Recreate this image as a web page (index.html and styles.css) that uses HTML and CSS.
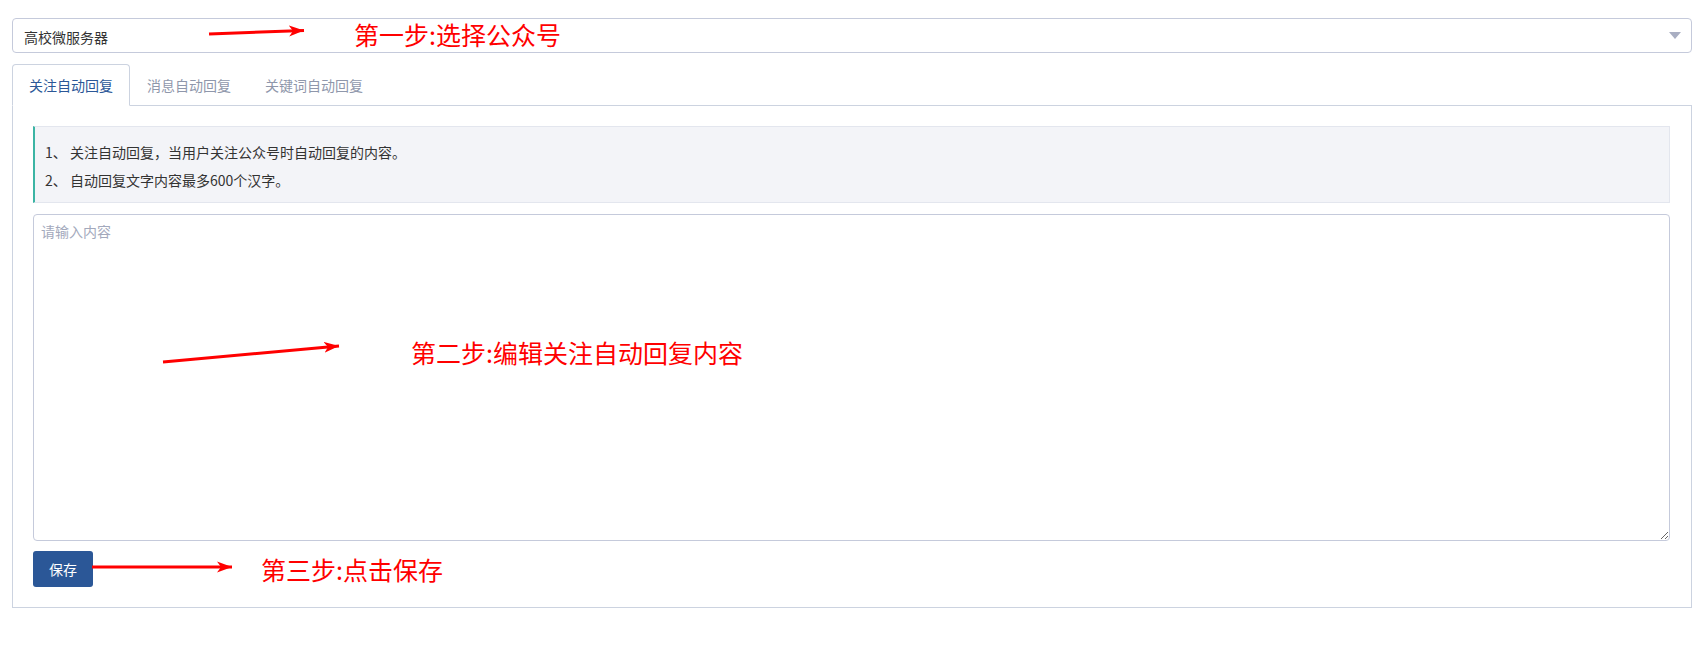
FILE: index.html
```
<!DOCTYPE html>
<html lang="zh-CN">
<head>
    <meta charset="UTF-8">
    <title>自动回复</title>
    <link rel="stylesheet" href="styles.css">
</head>
<body>
    <div class="page">
        <div class="select-box">
            <span class="select-value">高校微服务器</span>
            <span class="select-caret"></span>
        </div>

        <ul class="tabs">
            <li class="tab active">关注自动回复</li>
            <li class="tab">消息自动回复</li>
            <li class="tab">关键词自动回复</li>
        </ul>

        <div class="panel">
            <div class="tips">
                <p>1、 关注自动回复，当用户关注公众号时自动回复的内容。</p>
                <p>2、 自动回复文字内容最多600个汉字。</p>
            </div>
            <textarea class="content-input" placeholder="请输入内容"></textarea>
            <div class="actions">
                <button class="btn-save">保存</button>
            </div>
        </div>
    </div>

    <!-- hand drawn annotations over the screenshot -->
    <svg class="marks" width="1704" height="654" viewBox="0 0 1704 654">
        <defs>
            <marker id="head" markerUnits="userSpaceOnUse" markerWidth="16" markerHeight="12" refX="15" refY="6" orient="auto">
                <path d="M0,0.5 L15,6 L0,11.5 L4,6 Z" fill="#ff0000"/>
            </marker>
        </defs>
        <line x1="209" y1="34" x2="304" y2="30.5" stroke="#ff0000" stroke-width="3" marker-end="url(#head)"/>
        <line x1="163" y1="362" x2="339" y2="346" stroke="#ff0000" stroke-width="3" marker-end="url(#head)"/>
        <line x1="92" y1="567" x2="232" y2="567" stroke="#ff0000" stroke-width="3" marker-end="url(#head)"/>
    </svg>
    <div class="note note-1">第一步:选择公众号</div>
    <div class="note note-2">第二步:编辑关注自动回复内容</div>
    <div class="note note-3">第三步:点击保存</div>
</body>
</html>
```

FILE: styles.css
```
body {
    margin: 0;
    padding: 0;
    background: #fff;
    font-family: "Noto Sans CJK SC", "Liberation Sans", sans-serif;
    font-size: 14px;
    color: #333;
}
.page {
    padding: 18px 12px 0 12px;
}
.select-box {
    height: 33px;
    border: 1px solid #c5cadb;
    border-radius: 4px;
    display: flex;
    align-items: center;
    justify-content: space-between;
    padding: 0 10px 0 11px;
}
.select-value {
    font-size: 14px;
    color: #333;
    line-height: 20px;
    padding-top: 3px;
}
.select-caret {
    width: 0;
    height: 0;
    border-left: 6px solid transparent;
    border-right: 6px solid transparent;
    border-top: 7px solid #a9aec2;
}
.tabs {
    list-style: none;
    margin: 11px 0 0 0;
    padding: 0;
    display: flex;
    border-bottom: 1px solid #ccd3e0;
}
.tab {
    padding: 10px 16px 10px 16px;
    line-height: 20px;
    margin-bottom: -1px;
    border: 1px solid transparent;
    border-radius: 4px 4px 0 0;
    color: #8f97ab;
    font-size: 14px;
}
.tab.active {
    color: #2b5797;
    background: #fff;
    border-color: #ccd3e0;
    border-bottom-color: #fff;
}
.panel {
    border: 1px solid #ccd3e0;
    border-top: none;
    padding: 20px 21px 20px 20px;
}
.tips {
    background: #f3f4f8;
    border: 1px solid #e3e6ee;
    border-left: 2px solid #3bb4a4;
    padding: 11px 12px 8px 10px;
}
.tips p {
    margin: 0;
    line-height: 28px;
    font-size: 14px;
    color: #333;
}
.content-input {
    display: block;
    box-sizing: border-box;
    width: 100%;
    height: 327px;
    margin-top: 11px;
    padding: 6px 7px;
    border: 1px solid #c5cadb;
    border-radius: 4px;
    font-family: "Noto Sans CJK SC", "Liberation Sans", sans-serif;
    font-size: 14px;
    line-height: 20px;
    color: #333;
    outline: none;
}
.content-input::placeholder {
    color: #a3a9bc;
}
.actions {
    margin-top: 10px;
}
.btn-save {
    width: 60px;
    height: 36px;
    border: none;
    border-radius: 3px;
    background: #2b5797;
    color: #fff;
    font-family: "Noto Sans CJK SC", "Liberation Sans", sans-serif;
    font-size: 14px;
    padding: 0;
}
.marks {
    position: absolute;
    top: 0;
    left: 0;
    pointer-events: none;
}
.note {
    position: absolute;
    color: #ff0000;
    font-size: 25px;
    line-height: 25px;
    white-space: nowrap;
}
.note-1 {
    left: 354px;
    top: 22px;
}
.note-2 {
    left: 411px;
    top: 340px;
}
.note-3 {
    left: 261px;
    top: 557px;
}
```
